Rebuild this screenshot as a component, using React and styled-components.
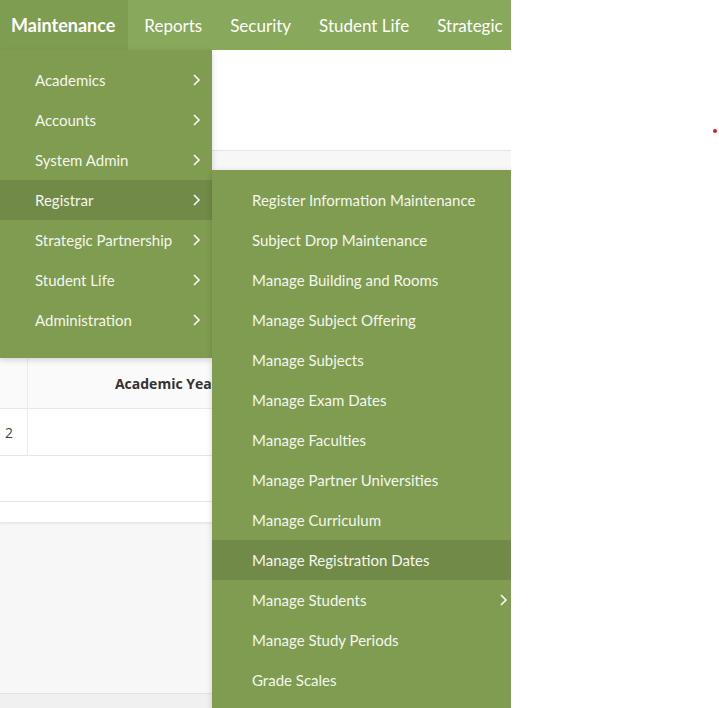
import React from "react";
import styled, { createGlobalStyle } from "styled-components";

const Global = createGlobalStyle`
  html, body { margin: 0; padding: 0; background: #ffffff; }
  body { font-family: "Lato", "Open Sans", "Liberation Sans", sans-serif; }
  * { box-sizing: border-box; }
`;

const Page = styled.div`
  position: relative;
  display: flex;
  width: 719px;
  height: 708px;
  overflow: hidden;
  background: #ffffff;
`;

const Frame = styled.div`
  position: relative;
  width: 511px;
  height: 708px;
  overflow: hidden;
  display: flex;
  flex-direction: column;
  background: #f7f7f7;
`;

const NavBar = styled.nav`
  display: flex;
  align-items: stretch;
  height: 50px;
  flex: none;
  background: #88a85b;
  white-space: nowrap;
`;

const NavItem = styled.div`
  display: flex;
  align-items: center;
  padding: ${(p) => (p.$active ? "0 13px 0 11px" : "0 12px 0 16px")};
  background: ${(p) => (p.$active ? "#7f9d50" : "transparent")};
  color: #ffffff;
  font-size: ${(p) => (p.$active ? "18px" : "17px")};
  font-weight: ${(p) => (p.$active ? 700 : 400)};
`;

const Header = styled.div`
  height: 101px;
  flex: none;
  background: #ffffff;
  border-bottom: 1px solid #e6e6e6;
`;

const Body = styled.div`
  flex: 1;
  display: flex;
  flex-direction: column;
  background: #f7f7f7;
`;

const Card = styled.div`
  margin-top: 207px;
  background: #ffffff;
  box-shadow: 0 1px 3px rgba(0, 0, 0, 0.1);
  flex: none;
`;

const Table = styled.div`
  display: grid;
  grid-template-columns: 28px 278px 1fr;
`;

const HeadCell = styled.div`
  height: 51px;
  display: flex;
  align-items: center;
  justify-content: center;
  background: #fafafa;
  border-right: 1px solid #ececec;
  border-bottom: 1px solid #e8e8e8;
  font-family: "Open Sans", "Liberation Sans", sans-serif;
  font-size: 14px;
  font-weight: 700;
  color: #333333;
`;

const Cell = styled.div`
  height: 47px;
  display: flex;
  align-items: center;
  justify-content: ${(p) => (p.$start ? "flex-start" : "center")};
  padding-left: ${(p) => (p.$start ? "5px" : "0")};
  border-right: ${(p) => (p.$noRight ? "none" : "1px solid #ececec")};
  border-bottom: 1px solid #e6e6e6;
  font-family: "Open Sans", "Liberation Sans", sans-serif;
  font-size: 14px;
  color: #444444;
`;

const EmptyRow = styled.div`
  height: 46px;
  border-bottom: 1px solid #e6e6e6;
`;

const CardFoot = styled.div`
  height: 20px;
`;

const Spacer = styled.div`
  flex: 1;
`;

const FooterBar = styled.div`
  height: 15px;
  flex: none;
  border-top: 1px solid #e2e2e2;
  background: #f0f0f0;
`;

const Menu = styled.ul`
  position: absolute;
  margin: 0;
  list-style: none;
  left: ${(p) => p.$left}px;
  top: ${(p) => p.$top}px;
  width: ${(p) => p.$width}px;
  padding: 10px 0 ${(p) => p.$bottom}px;
  background: #7f9c50;
  box-shadow: 0 2px 6px rgba(0, 0, 0, 0.16);
  z-index: ${(p) => p.$z};
`;

const MenuItem = styled.li`
  position: relative;
  display: flex;
  align-items: center;
  justify-content: space-between;
  height: 40px;
  padding-left: ${(p) => p.$indent}px;
  padding-right: ${(p) => p.$right}px;
  background: ${(p) => (p.$hover ? "#718a47" : "transparent")};
  color: #f4f6ef;
  font-size: 15px;
  white-space: nowrap;
`;

const Chevron = () => (
  <svg width="8" height="12" viewBox="0 0 8 12" fill="none">
    <path d="M1.5 1.5 L6 6 L1.5 10.5" stroke="#ffffff" strokeWidth="1.5" strokeLinecap="square" />
  </svg>
);

const Dot = styled.div`
  position: absolute;
  left: 713px;
  top: 129px;
  width: 4px;
  height: 4px;
  border-radius: 50%;
  background: #e5191c;
`;

const navItems = ["Maintenance", "Reports", "Security", "Student Life", "Strategic"];
const mainMenu = [
  "Academics",
  "Accounts",
  "System Admin",
  "Registrar",
  "Strategic Partnership",
  "Student Life",
  "Administration",
];
const subMenu = [
  "Register Information Maintenance",
  "Subject Drop Maintenance",
  "Manage Building and Rooms",
  "Manage Subject Offering",
  "Manage Subjects",
  "Manage Exam Dates",
  "Manage Faculties",
  "Manage Partner Universities",
  "Manage Curriculum",
  "Manage Registration Dates",
  "Manage Students",
  "Manage Study Periods",
  "Grade Scales",
];

export default function App() {
  return (
    <>
      <Global />
      <Page>
        <Frame>
          <NavBar>
            {navItems.map((n, i) => (
              <NavItem key={n} $active={i === 0}>
                {n}
              </NavItem>
            ))}
          </NavBar>
          <Header />
          <Body>
            <Card>
              <Table>
                <HeadCell />
                <HeadCell>Academic Year</HeadCell>
                <HeadCell />
                <Cell $start>2</Cell>
                <Cell />
                <Cell $noRight />
              </Table>
              <EmptyRow />
              <CardFoot />
            </Card>
            <Spacer />
            <FooterBar />
          </Body>

          <Menu $left={0} $top={50} $width={212} $bottom={18} $z={2}>
            {mainMenu.map((m) => (
              <MenuItem key={m} $indent={35} $right={11} $hover={m === "Registrar"}>
                <span>{m}</span>
                <Chevron />
              </MenuItem>
            ))}
          </Menu>

          <Menu $left={212} $top={170} $width={300} $bottom={10} $z={3}>
            {subMenu.map((m) => (
              <MenuItem key={m} $indent={40} $right={4} $hover={m === "Manage Registration Dates"}>
                <span>{m}</span>
                {m === "Manage Students" && <Chevron />}
              </MenuItem>
            ))}
          </Menu>
        </Frame>
        <Dot />
      </Page>
    </>
  );
}
